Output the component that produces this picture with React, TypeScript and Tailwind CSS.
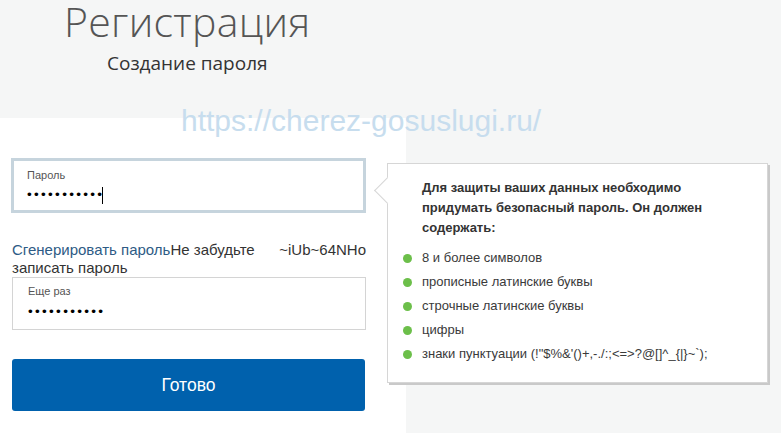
import React from 'react';

const rules = [
  '8 и более символов',
  'прописные латинские буквы',
  'строчные латинские буквы',
  'цифры',
  'знаки пунктуации (!"$%&\'()+,-./:;<=>?@[]^_{|}~`);',
];

function Dots({ count }: { count: number }) {
  return (
    <span className="text-[13.5px] leading-none tracking-[2.3px] text-black">
      {'•'.repeat(count)}
    </span>
  );
}

export default function App() {
  return (
    <div className="relative w-[781px] h-[433px] overflow-hidden bg-[#f5f6f6] font-['Liberation_Sans',Arial,sans-serif] text-[#333]">
      <header className="h-[118px] flex flex-col">
        <h1 className="ml-[64px] text-[41px] leading-[42px] font-light text-[#555] font-['Open_Sans',sans-serif] tracking-[0.3px]">
          Регистрация
        </h1>
        <p className="ml-[107px] mt-[8px] text-[19px] leading-[26px] text-[#333] font-['Open_Sans',sans-serif]">
          Создание пароля
        </p>
      </header>

      <div className="flex">
        <div className="w-[406px] h-[315px] bg-white pl-[11px] pt-[40px]">
          <div className="w-[355px] h-[55px] border-[3px] border-[#c6d4dd] bg-white pl-[13px] pt-[7px]">
            <div className="text-[11px] leading-[14px] text-[#555]">Пароль</div>
            <div className="mt-[4px] flex items-center h-[18px]">
              <Dots count={11} />
              <span className="w-px h-[17px] bg-black ml-[-2px]" />
            </div>
          </div>

          <div className="mt-[28px] w-[355px] pl-[1px] text-[15px] leading-[18px]">
            <span className="float-right text-[#333]">~iUb~64NHo</span>
            <a className="text-[#2e5b85]">Сгенерировать пароль</a>
            <span>Не забудьте записать пароль</span>
          </div>

          <div className="ml-[1px] w-[354px] h-[53px] border border-[#d4d4d4] bg-white pl-[15px] pt-[6px]">
            <div className="text-[11px] leading-[14px] text-[#555]">Еще раз</div>
            <div className="mt-[5px] flex items-center h-[18px]">
              <Dots count={11} />
            </div>
          </div>

          <button className="mt-[29px] ml-[1px] w-[353px] h-[52px] rounded-[3px] bg-[#0061ad] text-white text-[17.5px]">
            Готово
          </button>
        </div>

        <div className="relative mt-[45px] ml-[-19px] w-[381px] h-[220px] bg-white border border-[#d6d6d6] shadow-[2px_2px_0_#c9c9c9] pl-[34px] pr-[20px] pt-[14px]">
          <span className="absolute left-[-10px] top-[17px] w-[19px] h-[19px] rotate-45 bg-white border-l border-b border-[#d6d6d6]" />
          <p className="relative text-[13px] leading-[20px] font-bold text-[#333]">
            Для защиты ваших данных необходимо
            <br />
            придумать безопасный пароль. Он должен
            <br />
            содержать:
          </p>
          <ul className="mt-[8px] flex flex-col">
            {rules.map((r) => (
              <li key={r} className="relative h-[24px] flex items-center text-[13px] text-[#3a3a3a]">
                <span className="absolute left-[-19px] w-[9px] h-[9px] rounded-full bg-[#6cbf4a]" />
                {r}
              </li>
            ))}
          </ul>
        </div>
      </div>

      <div className="absolute left-[181px] top-[104px] text-[30px] leading-[34px] text-[#c7ddee] pointer-events-none">
        https://cherez-gosuslugi.ru/
      </div>
    </div>
  );
}
